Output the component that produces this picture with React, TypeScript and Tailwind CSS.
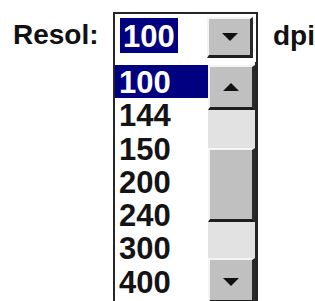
import React from "react";

const items = ["100", "144", "150", "200", "240", "300", "400"];

function Arrow({ up }: { up?: boolean }) {
  return (
    <svg width="16" height="8" viewBox="0 0 16 8" className="block">
      {up ? <polygon points="8,0 16,8 0,8" fill="#111" /> : <polygon points="0,0 16,0 8,8" fill="#111" />}
    </svg>
  );
}

export default function App() {
  return (
    <div
      className="w-[315px] h-[301px] bg-white overflow-hidden flex items-start text-[#111]"
      style={{ fontFamily: '"Liberation Sans", Arial, sans-serif' }}
    >
      <div className="w-[113px] shrink-0 pl-[13px] mt-[19px] text-[28px] leading-[32px] font-bold">Resol:</div>

      <div className="w-[145px] shrink-0 h-[300px] mt-[12px] border-x-2 border-t-2 border-[#262626] flex flex-col">
        {/* combo row */}
        <div className="h-[48px] shrink-0 flex items-start">
          <div className="ml-[5px] mt-[4px] h-[35px] px-[3px] bg-[#000080] text-white text-[31px] leading-[37px] font-bold">
            100
          </div>
          <div className="ml-auto mr-[3px] mt-[3px] w-[46px] h-[41px] bg-[#c0c0c0] border-t-2 border-l-2 border-t-[#f4f4f4] border-l-[#f4f4f4] border-b-[3px] border-r-[3px] border-b-[#1e1e1e] border-r-[#2a2a2a] flex items-center justify-center">
            <Arrow />
          </div>
        </div>

        {/* list */}
        <div className="flex pt-[3px] border-r-[1px] border-[#262626]">
          <div className="w-[93px] shrink-0 flex flex-col">
            {items.map((v, i) => (
              <div
                key={v}
                className={
                  i === 0
                    ? "h-[33.3px] pl-[4px] bg-[#000080] text-white text-[31px] leading-[35px] font-bold"
                    : "h-[33.3px] pl-[4px] text-[#141414] text-[31px] leading-[35px] font-bold"
                }
              >
                {v}
              </div>
            ))}
          </div>
          <div className="flex-1 flex flex-col">
            <div className="h-[45px] bg-[#c0c0c0] border-t-2 border-l-2 border-t-[#f4f4f4] border-l-[#f4f4f4] border-b-[3px] border-r-[3px] border-b-[#1e1e1e] border-r-[#2a2a2a] flex items-center justify-center">
              <Arrow up />
            </div>
            <div className="h-[38px] bg-[#e2e2e2]" />
            <div className="h-[74px] bg-[#c0c0c0] border-t-2 border-l-2 border-t-[#f4f4f4] border-l-[#f4f4f4] border-b-[3px] border-r-[3px] border-b-[#1e1e1e] border-r-[#2a2a2a]" />
            <div className="h-[36px] bg-[#e2e2e2]" />
            <div className="h-[45px] bg-[#c0c0c0] border-t-2 border-l-2 border-t-[#f4f4f4] border-l-[#f4f4f4] border-b-[3px] border-r-[3px] border-b-[#1e1e1e] border-r-[#2a2a2a] flex items-start pt-[18px] justify-center">
              <Arrow />
            </div>
          </div>
        </div>
      </div>

      <div className="ml-[15px] mt-[20px] text-[28px] leading-[32px] font-bold whitespace-nowrap">dpi</div>
    </div>
  );
}
